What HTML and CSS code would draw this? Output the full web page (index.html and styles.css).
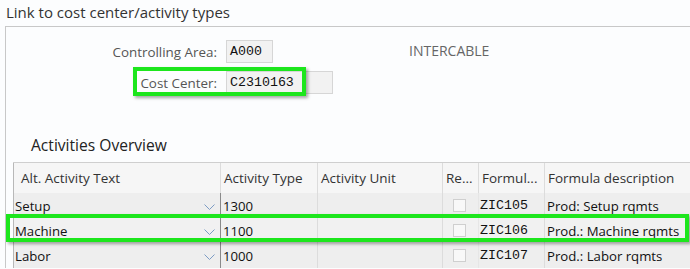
FILE: index.html
```html
<!DOCTYPE html>
<html>
<head>
<meta charset="utf-8">
<link rel="stylesheet" href="styles.css">
</head>
<body>
<div class="title">Link to cost center/activity types</div>
<div class="panel">
  <div class="form">
    <div class="frow">
      <span class="label">Controlling Area:</span>
      <span class="field w47">A000</span>
      <span class="desc">INTERCABLE</span>
    </div>
    <div class="frow">
      <span class="label">Cost Center:</span>
      <span class="field w107">C2310163</span>
      <span class="mark mark-cc"></span>
    </div>
  </div>
  <div class="section">Activities Overview</div>
  <div class="tablewrap">
    <table class="grid">
      <colgroup>
        <col class="w-c1"><col class="w-c2"><col class="w-c3"><col class="w-c4"><col class="w-c5"><col class="w-c6">
      </colgroup>
      <thead>
        <tr>
          <th class="c1">Alt. Activity Text</th>
          <th>Activity Type</th>
          <th>Activity Unit</th>
          <th>Re...</th>
          <th>Formul...</th>
          <th>Formula description</th>
        </tr>
      </thead>
      <tbody>
        <tr>
          <td class="c1"><div class="dd"><span>Setup</span><svg width="11" height="6" viewBox="0 0 11 6"><polyline points="0.5,0.5 5.5,5.5 10.5,0.5" fill="none" stroke="#7d9cc4" stroke-width="1"/></svg></div></td>
          <td class="num">1300</td>
          <td></td>
          <td class="cb"><span class="box"></span></td>
          <td class="mono">ZIC105</td>
          <td>Prod: Setup rqmts</td>
        </tr>
        <tr class="alt">
          <td class="c1"><div class="dd"><span>Machine</span><svg width="11" height="6" viewBox="0 0 11 6"><polyline points="0.5,0.5 5.5,5.5 10.5,0.5" fill="none" stroke="#7d9cc4" stroke-width="1"/></svg></div></td>
          <td class="num">1100</td>
          <td></td>
          <td class="cb"><span class="box"></span></td>
          <td class="mono">ZIC106</td>
          <td>Prod.: Machine rqmts</td>
        </tr>
        <tr>
          <td class="c1"><div class="dd"><span>Labor</span><svg width="11" height="6" viewBox="0 0 11 6"><polyline points="0.5,0.5 5.5,5.5 10.5,0.5" fill="none" stroke="#7d9cc4" stroke-width="1"/></svg></div></td>
          <td class="num">1000</td>
          <td></td>
          <td class="cb"><span class="box"></span></td>
          <td class="mono">ZIC107</td>
          <td>Prod.: Labor rqmts</td>
        </tr>
      </tbody>
    </table>
    <span class="mark mark-row"></span>
  </div>
</div>
</body>
</html>
```

FILE: styles.css
```css
html, body {
  margin: 0;
  padding: 0;
}
body {
  width: 690px;
  height: 269px;
  overflow: hidden;
  background: #fcfdfe;
  font-family: "Open Sans", "Noto Sans", sans-serif;
  color: #333;
}
.title {
  height: 26px;
  line-height: 26px;
  padding-left: 6px;
  font-size: 15px;
  color: #333;
  margin-top: -1px;
  margin-bottom: 1px;
}
.panel {
  margin-left: 5px;
  border-top: 1px solid #c8c8c8;
  border-left: 1px solid #c8c8c8;
  background: #fcfdfe;
  width: 800px;
}
.form {
  padding-top: 13px;
  display: flex;
  flex-direction: column;
  gap: 8px;
}
.frow {
  position: relative;
  display: flex;
  align-items: center;
  height: 23px;
}
.label {
  width: 211px;
  text-align: right;
  font-size: 13.4px;
  color: #555;
  margin-right: 9px;
}
.field {
  box-sizing: border-box;
  height: 23px;
  line-height: 21px;
  border: 1px solid #d6d6d6;
  background: #f2f2f2;
  font-family: "Liberation Mono", monospace;
  font-size: 13.3px;
  color: #111;
  padding-left: 3px;
}
.w47 { width: 47px; }
.w107 { width: 107px; }
.desc {
  margin-left: 136px;
  font-size: 14px;
  color: #666;
  margin-top: -2px;
}
.mark {
  position: absolute;
  box-sizing: border-box;
  border: 4px solid #1de61d;
  box-shadow: 2px 2px 3px rgba(0, 0, 0, 0.35);
}
.mark-cc {
  left: 127px;
  top: -4px;
  width: 173px;
  height: 29px;
}
.section {
  margin-top: 40px;
  padding-left: 25px;
  height: 22px;
  line-height: 22px;
  font-size: 15.6px;
  color: #222;
}
.tablewrap {
  position: relative;
  margin-top: 6px;
}
.grid {
  margin-left: 7px;
  border-collapse: collapse;
  table-layout: fixed;
  width: 691px;
  font-family: "Open Sans", "Noto Sans", sans-serif;
}
.w-c1 { width: 207px; }
.w-c2 { width: 97px; }
.w-c3 { width: 125px; }
.w-c4 { width: 36px; }
.w-c5 { width: 66px; }
.w-c6 { width: 160px; }
.grid th {
  height: 30px;
  background: #f6f6f6;
  border-top: 1px solid #cfcfcf;
  border-left: 1px solid #dcdcdc;
  text-align: left;
  font-weight: normal;
  font-size: 13.5px;
  color: #333;
  padding: 0 0 0 3px;
  white-space: nowrap;
  overflow: hidden;
}
.grid th.c1 {
  padding-left: 7px;
  border-left: 1px solid #b8b8b8;
}
.grid td {
  height: 25px;
  padding: 0 0 0 2px;
  background: #eeeeee;
  border-left: 1px solid #dcdcdc;
  font-size: 13.2px;
  color: #111;
  white-space: nowrap;
  box-sizing: border-box;
}
.grid tr.alt td {
  background: #f1f1f1;
}
.grid td.c1 {
  border-left: 1px solid #b8b8b8;
  padding: 0 5px 0 1px;
}
.grid td.num {
  border-left: 1px solid #8a8a8a;
}
.grid td.mono {
  font-family: "Liberation Mono", monospace;
  font-size: 13.3px;
  padding-left: 1px;
  border-left: 1px solid #e6e6e6;
}
.grid td.cb {
  padding-left: 10px;
}
.dd {
  display: flex;
  align-items: center;
  justify-content: space-between;
}
.dd svg {
  display: block;
  margin-top: 3px;
}
.box {
  display: block;
  width: 13px;
  height: 13px;
  box-sizing: border-box;
  border: 1px solid #cfcfcf;
  background: #f8f8f8;
}
.mark-row {
  left: 0px;
  top: 52px;
  width: 683px;
  height: 28px;
}
```
